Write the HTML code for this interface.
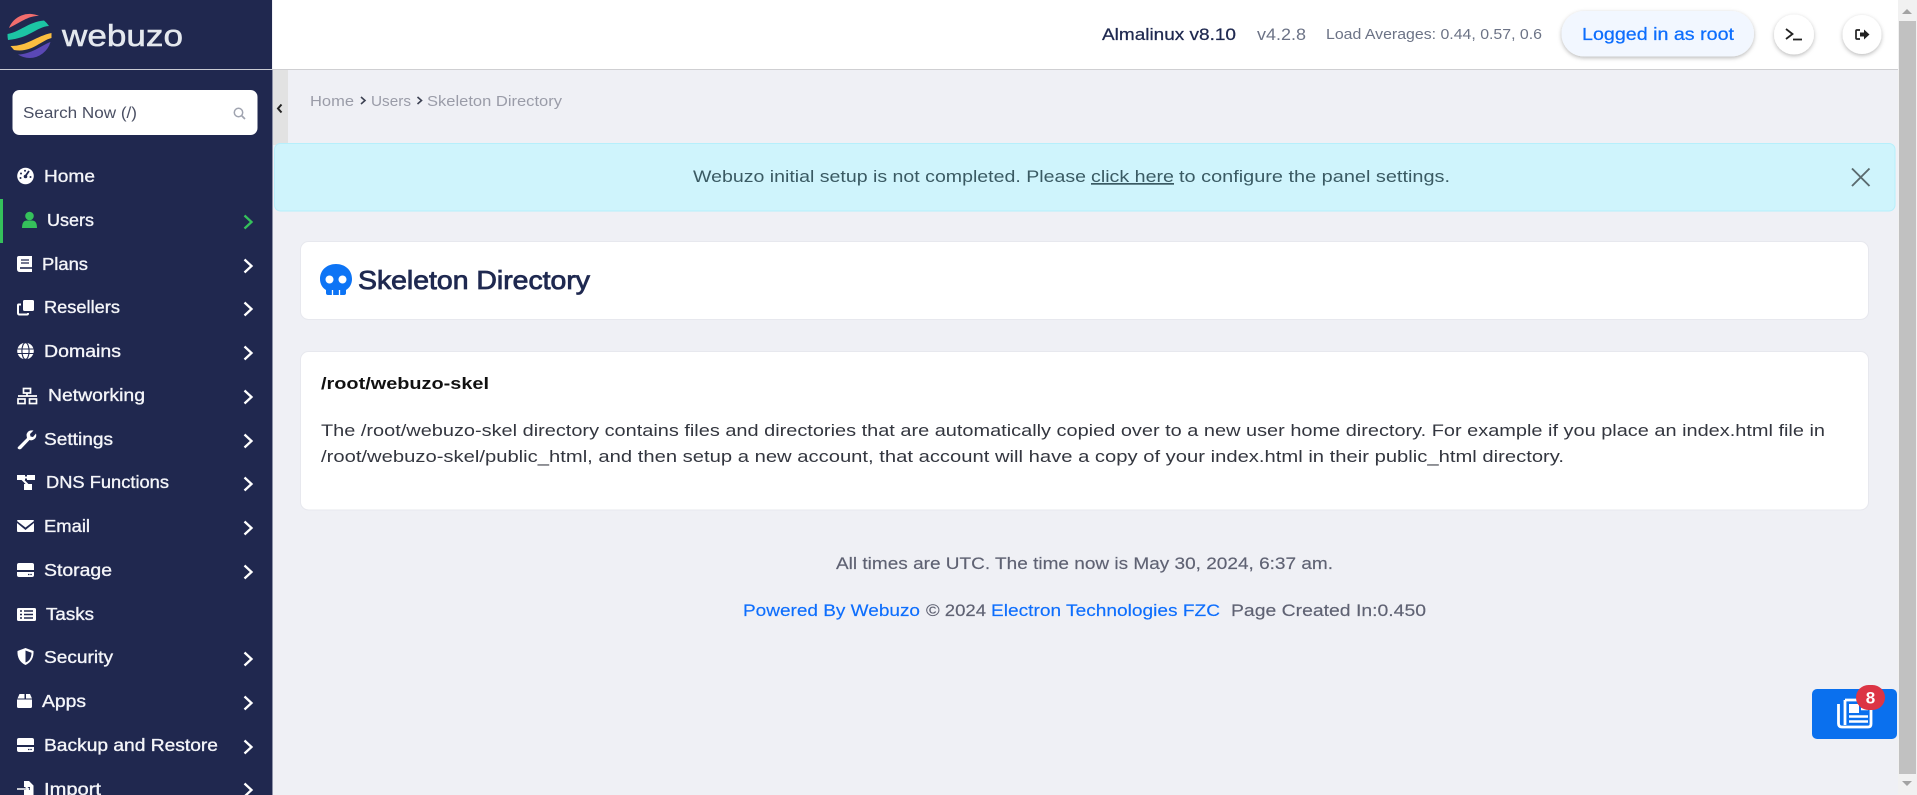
<!DOCTYPE html>
<html><head><meta charset="utf-8"><title>Skeleton Directory</title>
<style>
html,body{margin:0;padding:0;width:1917px;height:795px;overflow:hidden;background:#eff0f5}
svg{display:block;position:absolute;left:0;top:0}
text{font-family:"Liberation Sans",Arial,sans-serif;white-space:pre}
.m text{font-size:17.5px;fill:#f4f5f9;stroke:#f4f5f9;stroke-width:.35}
</style></head><body>
<svg width="1917" height="795" viewBox="0 0 1917 795" xmlns="http://www.w3.org/2000/svg">
<defs>
<filter id="sh" x="-20%" y="-30%" width="140%" height="170%"><feDropShadow dx="0" dy="1.5" stdDeviation="2" flood-color="#000" flood-opacity=".28"/></filter>
<path id="chev" d="M-3.5 -6.5 L3.5 0 L-3.5 6.5" fill="none" stroke="#fff" stroke-width="2.3"/>
</defs>
<!-- backgrounds -->
<rect width="1917" height="795" fill="#eff0f5"/>
<rect x="273" width="1625" height="69" fill="#fff"/>
<rect x="273" y="69" width="1625" height="1" fill="#cfcfd2"/>
<rect x="273" y="70" width="15" height="75" fill="#e2e2e2"/>
<path d="M281.5 104.5 L278 108.5 L281.5 112.5" fill="none" stroke="#222" stroke-width="2"/>
<!-- scrollbar -->
<rect x="1898" width="19" height="795" fill="#f1f1f1"/>
<rect x="1899" y="21" width="17" height="753" fill="#c1c1c1"/>
<path d="M1902 14 L1907 9 L1912 14Z" fill="#a3a3a3"/>
<path d="M1902 781 L1907 786 L1912 781Z" fill="#a3a3a3"/>
<!-- sidebar -->
<rect width="272" height="795" fill="#20284f"/>
<rect x="272" y="70" width="1" height="725" fill="#8e92a8"/>
<rect x="0" y="69" width="273" height="1" fill="#c9cbd3"/>
<rect x="0" y="199" width="3" height="44" fill="#35c15b"/>
<!-- logo -->
<path d="M9 28 A22 22 0 0 1 39 16 C30 15.5 24 20 9 28Z" fill="#f26d6d"/>
<path d="M7.5 34 C20 32 28 22 44 20.5 Q47 23 49 26 C36 27 30 38 8 40 Q7.4 37 7.5 34Z" fill="#1cc5a4"/>
<path d="M10.5 46 C28 46 36 36 51.5 33 L51.5 38 C40 41 32 53 14 50Z" fill="#fbbe40"/>
<path d="M18 54.5 C32 54 40 46 50.5 42 A22 22 0 0 1 29.5 58 A22 22 0 0 1 18 54.5Z" fill="#5a48b5"/>
<text x="62" y="46" font-size="31" fill="#e4e8ee" stroke="#e4e8ee" stroke-width=".5" textLength="121" lengthAdjust="spacingAndGlyphs">webuzo</text>
<!-- search -->
<rect x="12.5" y="90" width="245" height="45" rx="7" fill="#fff"/>
<text x="23" y="118" font-size="15.5" fill="#4a4f63" textLength="114" lengthAdjust="spacingAndGlyphs">Search Now (/)</text>
<circle cx="238.5" cy="112.5" r="4.2" fill="none" stroke="#a0a4b0" stroke-width="1.5"/>
<path d="M241.6 115.6 L245 119" stroke="#a0a4b0" stroke-width="1.7"/>
<!-- menu text -->
<g class="m">
<text x="44" y="182" textLength="51" lengthAdjust="spacingAndGlyphs">Home</text>
<text x="47" y="226" textLength="47" lengthAdjust="spacingAndGlyphs">Users</text>
<text x="42" y="270" textLength="46" lengthAdjust="spacingAndGlyphs">Plans</text>
<text x="44" y="313" textLength="76" lengthAdjust="spacingAndGlyphs">Resellers</text>
<text x="44" y="357" textLength="77" lengthAdjust="spacingAndGlyphs">Domains</text>
<text x="48" y="401" textLength="97" lengthAdjust="spacingAndGlyphs">Networking</text>
<text x="44" y="445" textLength="69" lengthAdjust="spacingAndGlyphs">Settings</text>
<text x="46" y="488" textLength="123" lengthAdjust="spacingAndGlyphs">DNS Functions</text>
<text x="44" y="532" textLength="46" lengthAdjust="spacingAndGlyphs">Email</text>
<text x="44" y="576" textLength="68" lengthAdjust="spacingAndGlyphs">Storage</text>
<text x="46" y="620" textLength="48" lengthAdjust="spacingAndGlyphs">Tasks</text>
<text x="44" y="663" textLength="69" lengthAdjust="spacingAndGlyphs">Security</text>
<text x="42" y="707" textLength="44" lengthAdjust="spacingAndGlyphs">Apps</text>
<text x="44" y="751" textLength="174" lengthAdjust="spacingAndGlyphs">Backup and Restore</text>
<text x="44" y="795" textLength="57" lengthAdjust="spacingAndGlyphs">Import</text>
</g>
<!-- chevrons -->
<path d="M244.5 215.5 L251.5 222 L244.5 228.5" fill="none" stroke="#35c15b" stroke-width="2.3"/>
<use href="#chev" x="248" y="266"/>
<use href="#chev" x="248" y="309"/>
<use href="#chev" x="248" y="353"/>
<use href="#chev" x="248" y="397"/>
<use href="#chev" x="248" y="441"/>
<use href="#chev" x="248" y="484"/>
<use href="#chev" x="248" y="528"/>
<use href="#chev" x="248" y="572"/>
<use href="#chev" x="248" y="659"/>
<use href="#chev" x="248" y="703"/>
<use href="#chev" x="248" y="747"/>
<use href="#chev" x="248" y="790"/>
<!-- menu icons -->
<circle cx="25.5" cy="176" r="8.3" fill="#fff"/>
<path d="M25.5 176 L29 171" stroke="#20284f" stroke-width="1.8"/><circle cx="25.5" cy="176.5" r="1.8" fill="#20284f"/><circle cx="21" cy="173.5" r="1" fill="#20284f"/><circle cx="25" cy="170.8" r="1" fill="#20284f"/><circle cx="20.5" cy="178" r="1" fill="#20284f"/><circle cx="30.5" cy="177" r="1" fill="#20284f"/>
<circle cx="29.5" cy="216" r="4.3" fill="#35c15b"/><path d="M22 228 Q22 220.5 27 220.5 H32 Q37 220.5 37 228Z" fill="#35c15b"/>
<path d="M19 256 H32 V272 H20 Q17 272 17 269 V258 Q17 256 19 256Z" fill="#fff"/><path d="M21 260 H29 M21 263 H29" stroke="#20284f" stroke-width="1.3"/><path d="M20 268 H32" stroke="#20284f" stroke-width="1.6"/>
<rect x="23" y="300" width="11" height="11" rx="1.5" fill="#fff"/><path d="M21 304.5 H18.5 Q18 304.5 18 305.5 V313 Q18 314.5 19.5 314.5 H27 Q28 314.5 28 313.5 V313" fill="none" stroke="#fff" stroke-width="2"/>
<circle cx="25.5" cy="351" r="8.3" fill="#fff"/><path d="M17.5 349 H33.5 M17.5 353.5 H33.5" stroke="#20284f" stroke-width="1.1"/><ellipse cx="25.5" cy="351" rx="3.6" ry="8.3" fill="none" stroke="#20284f" stroke-width="1.1"/>
<g fill="none" stroke="#fff" stroke-width="1.7"><rect x="23.5" y="388.5" width="7" height="4.5"/><rect x="18" y="399" width="7" height="4.5"/><rect x="29.5" y="399" width="7" height="4.5"/><path d="M27 393 V396 M18 396 H37"/></g>
<path d="M18 447 L27 438 Q25.5 433 29 431 Q31 430 33.5 430.5 L30 434 L30.5 436.5 L33 437 L36 433.5 Q37 437 34.5 439 Q32 441 29.5 440 L21 449 Q18.5 450 17.5 448Z" fill="#fff"/>
<rect x="17" y="475" width="8" height="5" fill="#fff"/><rect x="27" y="475" width="8" height="5" fill="#fff"/><rect x="24" y="484" width="8" height="6" fill="#fff"/><path d="M22 479 L28 485 M25 477.5 H28" stroke="#fff" stroke-width="2"/>
<path d="M17 521 Q17 520 18 520 H33 Q34 520 34 521 L25.5 527.5Z" fill="#fff"/><path d="M17 523 L25.5 530 L34 523 V531 Q34 532 33 532 H18 Q17 532 17 531Z" fill="#fff"/>
<path d="M19 563 H32 Q34 563 34 565 V570 H17 V565 Q17 563 19 563Z" fill="#fff"/><path d="M17 572 H34 V575 Q34 577 32 577 H19 Q17 577 17 575Z" fill="#fff"/><path d="M28 574.5 H32" stroke="#20284f" stroke-width="1.3" stroke-dasharray="1.5 .8"/>
<rect x="17" y="608" width="19" height="13" rx="1.5" fill="#fff"/><path d="M20 611 H22 M24 611 H33 M20 614.5 H22 M24 614.5 H33 M20 618 H22 M24 618 H33" stroke="#20284f" stroke-width="1.4"/>
<path d="M25.5 648 L33.5 651 Q34 661 25.5 665 Q17 661 17.5 651Z" fill="#fff"/><path d="M25.5 650.5 L31.5 652.7 Q31.5 660 25.5 662.5Z" fill="#20284f"/>
<path d="M19.5 694 H24.5 V698.5 H17.5Z M26 694 H30 L32 698.5 H26Z" fill="#fff"/><path d="M17 699.5 H32 V706.5 Q32 708 30.5 708 H18.5 Q17 708 17 706.5Z" fill="#fff"/>
<path d="M19 738 H32 Q34 738 34 740 V745 H17 V740 Q17 738 19 738Z" fill="#fff"/><path d="M17 747 H34 V750 Q34 752 32 752 H19 Q17 752 17 750Z" fill="#fff"/><path d="M28 749.5 H32" stroke="#20284f" stroke-width="1.3" stroke-dasharray="1.5 .8"/>
<path d="M24 781 H29 L33.5 785.5 V795 H24V790 H30 V787 H24Z" fill="#fff"/><path d="M17 789 H28 M25 786 L28.5 789 L25 792" fill="none" stroke="#fff" stroke-width="1.6"/>
<!-- top bar -->
<text x="1102" y="40" font-size="16.5" fill="#1f2950" stroke="#1f2950" stroke-width=".25" textLength="134" lengthAdjust="spacingAndGlyphs">Almalinux v8.10</text>
<text x="1257" y="40" font-size="16.5" fill="#6c7386" textLength="49" lengthAdjust="spacingAndGlyphs">v4.2.8</text>
<text x="1326" y="39" font-size="14.5" fill="#6c7386" textLength="216" lengthAdjust="spacingAndGlyphs">Load Averages: 0.44, 0.57, 0.6</text>
<rect x="1561.5" y="11" width="192.5" height="45.5" rx="22.7" fill="#f2f7ff" filter="url(#sh)"/>
<text x="1582" y="40" font-size="17.5" fill="#0d6efd" stroke="#0d6efd" stroke-width=".25" textLength="152" lengthAdjust="spacingAndGlyphs">Logged in as root</text>
<circle cx="1794" cy="34.5" r="20" fill="#fff" filter="url(#sh)"/>
<path d="M1786 29 L1792.5 34 L1786 39" fill="none" stroke="#222" stroke-width="1.8"/><path d="M1793 39.5 H1802" stroke="#222" stroke-width="1.8"/>
<circle cx="1862" cy="34.5" r="19.5" fill="#fff" filter="url(#sh)"/>
<path d="M1860 30 H1857 Q1856 30 1856 31 V38 Q1856 39 1857 39 H1860" fill="none" stroke="#222" stroke-width="1.7"/><path d="M1860 32.5 H1864 V29.5 L1869.5 34.5 L1864 39.5 V36.5 H1860Z" fill="#222"/>
<!-- breadcrumb -->
<text x="310" y="106" font-size="15" fill="#9a9ca8" textLength="44" lengthAdjust="spacingAndGlyphs">Home</text>
<path d="M361 97 L365 100.5 L361 104" fill="none" stroke="#3c4152" stroke-width="1.6"/>
<text x="371" y="106" font-size="15" fill="#9a9ca8" textLength="40" lengthAdjust="spacingAndGlyphs">Users</text>
<path d="M417.5 97 L421.5 100.5 L417.5 104" fill="none" stroke="#3c4152" stroke-width="1.6"/>
<text x="427" y="106" font-size="15" fill="#9a9ca8" textLength="135" lengthAdjust="spacingAndGlyphs">Skeleton Directory</text>
<!-- alert -->
<rect x="274.5" y="143.5" width="1620.5" height="67.5" rx="6" fill="#cff4fc" stroke="#b6effb"/>
<text x="693" y="182" font-size="17" fill="#3a5a63" textLength="393" lengthAdjust="spacingAndGlyphs">Webuzo initial setup is not completed. Please</text>
<text x="1091" y="182" font-size="17" fill="#3a5a63" text-decoration="underline" textLength="83" lengthAdjust="spacingAndGlyphs">click here</text>
<text x="1179" y="182" font-size="17" fill="#3a5a63" textLength="271" lengthAdjust="spacingAndGlyphs">to configure the panel settings.</text>
<path d="M1852 168.5 L1869.5 186 M1869.5 168.5 L1852 186" stroke="#5a6a6e" stroke-width="1.9"/>
<!-- card 1 -->
<rect x="300.5" y="241.5" width="1568" height="78" rx="8" fill="#fff" stroke="#e7e8ee"/>
<path d="M336 264 C327 264 320 270 320 279 C320 284 322.5 288 326 290 V293 Q326 295 328 295 H344 Q346 295 346 293 V290 C349.5 288 352 284 352 279 C352 270 345 264 336 264Z" fill="#0d74f5"/>
<circle cx="329.5" cy="279.5" r="4" fill="#fff"/><circle cx="342.5" cy="279.5" r="4" fill="#fff"/>
<path d="M332.5 290 V295 M339.5 290 V295" stroke="#fff" stroke-width="1.3"/>
<text x="358" y="289" font-size="26" fill="#1f2950" stroke="#1f2950" stroke-width=".8" textLength="232" lengthAdjust="spacingAndGlyphs">Skeleton Directory</text>
<!-- card 2 -->
<rect x="300.5" y="351.5" width="1568" height="158.5" rx="8" fill="#fff" stroke="#e7e8ee"/>
<text x="321" y="389" font-size="17" font-weight="700" fill="#111" textLength="168" lengthAdjust="spacingAndGlyphs">/root/webuzo-skel</text>
<text x="321" y="436" font-size="16.5" fill="#33363f" textLength="1504" lengthAdjust="spacingAndGlyphs">The /root/webuzo-skel directory contains files and directories that are automatically copied over to a new user home directory. For example if you place an index.html file in</text>
<text x="321" y="462" font-size="16.5" fill="#33363f" textLength="1243" lengthAdjust="spacingAndGlyphs">/root/webuzo-skel/public_html, and then setup a new account, that account will have a copy of your index.html in their public_html directory.</text>
<!-- footer -->
<text x="836" y="569" font-size="16.5" fill="#5f6273" stroke="#5f6273" stroke-width=".15" textLength="497" lengthAdjust="spacingAndGlyphs">All times are UTC. The time now is May 30, 2024, 6:37 am.</text>
<text x="743" y="616" font-size="16.5" fill="#0d6efd" stroke="#0d6efd" stroke-width=".15" textLength="177" lengthAdjust="spacingAndGlyphs">Powered By Webuzo</text>
<text x="926" y="616" font-size="16.5" fill="#5f6273" stroke="#5f6273" stroke-width=".15" textLength="60" lengthAdjust="spacingAndGlyphs">© 2024</text>
<text x="991" y="616" font-size="16.5" fill="#0d6efd" stroke="#0d6efd" stroke-width=".15" textLength="229" lengthAdjust="spacingAndGlyphs">Electron Technologies FZC</text>
<text x="1231" y="616" font-size="16.5" fill="#5f6273" stroke="#5f6273" stroke-width=".15" textLength="195" lengthAdjust="spacingAndGlyphs">Page Created In:0.450</text>
<!-- news button -->
<rect x="1812" y="689" width="85" height="50" rx="5" fill="#0a70ee"/>
<path d="M1845 700 H1868 Q1871 700 1871 703 V724 Q1871 727 1868 727 H1842 Q1838.5 727 1838.5 723.5 V704" fill="none" stroke="#fff" stroke-width="2.8"/>
<path d="M1845 700 V725" stroke="#fff" stroke-width="2.8"/>
<rect x="1849" y="704" width="10" height="9" fill="#fff"/><path d="M1849 716.5 H1868 M1849 721.5 H1868 M1861 709 H1868" stroke="#fff" stroke-width="2.4"/>
<rect x="1856" y="685" width="29" height="25" rx="12.5" fill="#dc3545"/>
<text x="1870.5" y="703.5" font-size="17" font-weight="700" fill="#fff" text-anchor="middle">8</text>
</svg>
</body></html>
